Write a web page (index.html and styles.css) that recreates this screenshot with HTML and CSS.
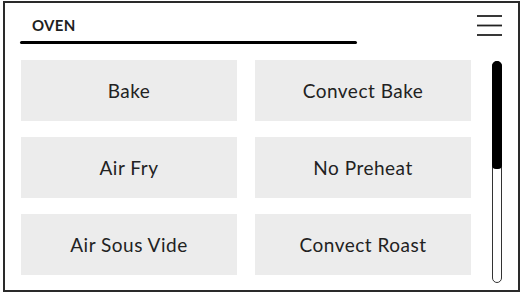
FILE: index.html
```html
<!DOCTYPE html>
<html>
<head>
<meta charset="utf-8">
<link rel="stylesheet" href="styles.css">
</head>
<body>
<div class="frame">
  <div class="header">
    <div class="tab">
      <div class="title">OVEN</div>
      <div class="underline"></div>
    </div>
    <svg class="menu" width="25" height="22" viewBox="0 0 25 22">
      <line x1="0" y1="1" x2="25" y2="1" stroke="#222" stroke-width="1.8"/>
      <line x1="0" y1="10.5" x2="25" y2="10.5" stroke="#222" stroke-width="1.8"/>
      <line x1="0" y1="20" x2="25" y2="20" stroke="#222" stroke-width="1.8"/>
    </svg>
  </div>
  <div class="body">
    <div class="grid">
      <div class="btn">Bake</div>
      <div class="btn">Convect Bake</div>
      <div class="btn">Air Fry</div>
      <div class="btn">No Preheat</div>
      <div class="btn">Air Sous Vide</div>
      <div class="btn">Convect Roast</div>
    </div>
    <div class="track"><div class="thumb"></div></div>
  </div>
</div>
</body>
</html>
```
FILE: styles.css
```css
html, body { margin: 0; padding: 0; background: #fff; }
body { font-family: "Lato", "Noto Sans", sans-serif; color: #1e1e1e; }
.frame {
  margin: 1px 0 0 3px;
  width: 517px;
  height: 291px;
  box-sizing: border-box;
  border: 2px solid #2a2a2a;
  padding: 0 16px 0 16px;
  display: flex;
  flex-direction: column;
}
.header {
  height: 57px;
  display: flex;
  justify-content: space-between;
  align-items: flex-start;
  flex: none;
}
.tab {
  width: 337px;
  margin-left: -1px;
  padding-top: 13px;
}
.title {
  font-size: 15px;
  line-height: 18px;
  font-weight: 700;
  padding-left: 12px;
  letter-spacing: 0.3px;
}
.underline {
  margin-top: 7px;
  height: 3px;
  border-radius: 2px;
  background: #000;
}
.menu { margin-top: 12px; display: block; }
.body {
  display: flex;
  justify-content: space-between;
  align-items: flex-start;
}
.grid {
  display: grid;
  grid-template-columns: 216px 216px;
  grid-auto-rows: 61px;
  column-gap: 18px;
  row-gap: 16px;
}
.btn {
  background: #ececec;
  display: flex;
  align-items: center;
  justify-content: center;
  font-size: 19px;
  letter-spacing: 0.5px;
  color: #222;
}
.track {
  margin-top: 1px;
  width: 10px;
  height: 222px;
  box-sizing: border-box;
  border: 1px solid #333;
  border-radius: 5px;
  display: flex;
  flex-direction: column;
}
.thumb {
  margin: -1px -1px 0 -1px;
  height: 108px;
  background: #000;
  border-radius: 5px 5px 4px 4px;
}
```
